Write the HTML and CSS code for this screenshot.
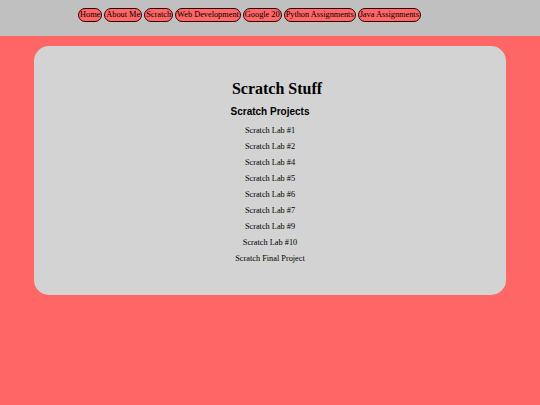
FILE: index.html
```html
<!DOCTYPE html>
<html>
<head>
<meta charset="utf-8">
<link rel="stylesheet" href="styles.css">
</head>
<body>
<header class="topbar">
  <nav class="nav">
    <a class="btn">Home</a>
    <a class="btn">About Me</a>
    <a class="btn">Scratch</a>
    <a class="btn">Web Development</a>
    <a class="btn">Google 20</a>
    <a class="btn">Python Assignments</a>
    <a class="btn">Java Assignments</a>
  </nav>
</header>
<main class="card">
  <h1 class="title">Scratch Stuff</h1>
  <h2 class="subtitle">Scratch Projects</h2>
  <ul class="list">
    <li>Scratch Lab #1</li>
    <li>Scratch Lab #2</li>
    <li>Scratch Lab #4</li>
    <li>Scratch Lab #5</li>
    <li>Scratch Lab #6</li>
    <li>Scratch Lab #7</li>
    <li>Scratch Lab #9</li>
    <li>Scratch Lab #10</li>
    <li>Scratch Final Project</li>
  </ul>
</main>
</body>
</html>
```

FILE: styles.css
```css
html, body {
  margin: 0;
  padding: 0;
}
body {
  background: #ff6666;
  font-family: "Liberation Serif", serif;
  height: 405px;
}
.topbar {
  background: #c0c0c0;
  height: 36px;
  box-sizing: border-box;
  padding: 8px 0 0 78px;
}
.nav {
  display: flex;
  gap: 2px;
}
.btn {
  display: block;
  background: #ff6666;
  border: 1px solid #330000;
  border-radius: 8px;
  font-size: 8.3px;
  line-height: 12px;
  padding: 0 1px;
  color: #000;
}
.card {
  background: #d3d3d3;
  margin: 10px 34px 0 34px;
  height: 249px;
  border-radius: 15px;
  box-sizing: border-box;
  padding-top: 34px;
  text-align: center;
}
.title {
  margin: 0;
  font-size: 16px;
  font-weight: bold;
  line-height: 18px;
  padding-left: 14px;
}
.subtitle {
  margin: 0;
  font-family: "Liberation Sans", sans-serif;
  font-size: 10px;
  line-height: 14px;
  padding-top: 7px;
}
.list {
  list-style: none;
  margin: 0;
  padding: 4px 0 0 0;
  font-size: 8.3px;
}
.list li {
  line-height: 16px;
}
```
